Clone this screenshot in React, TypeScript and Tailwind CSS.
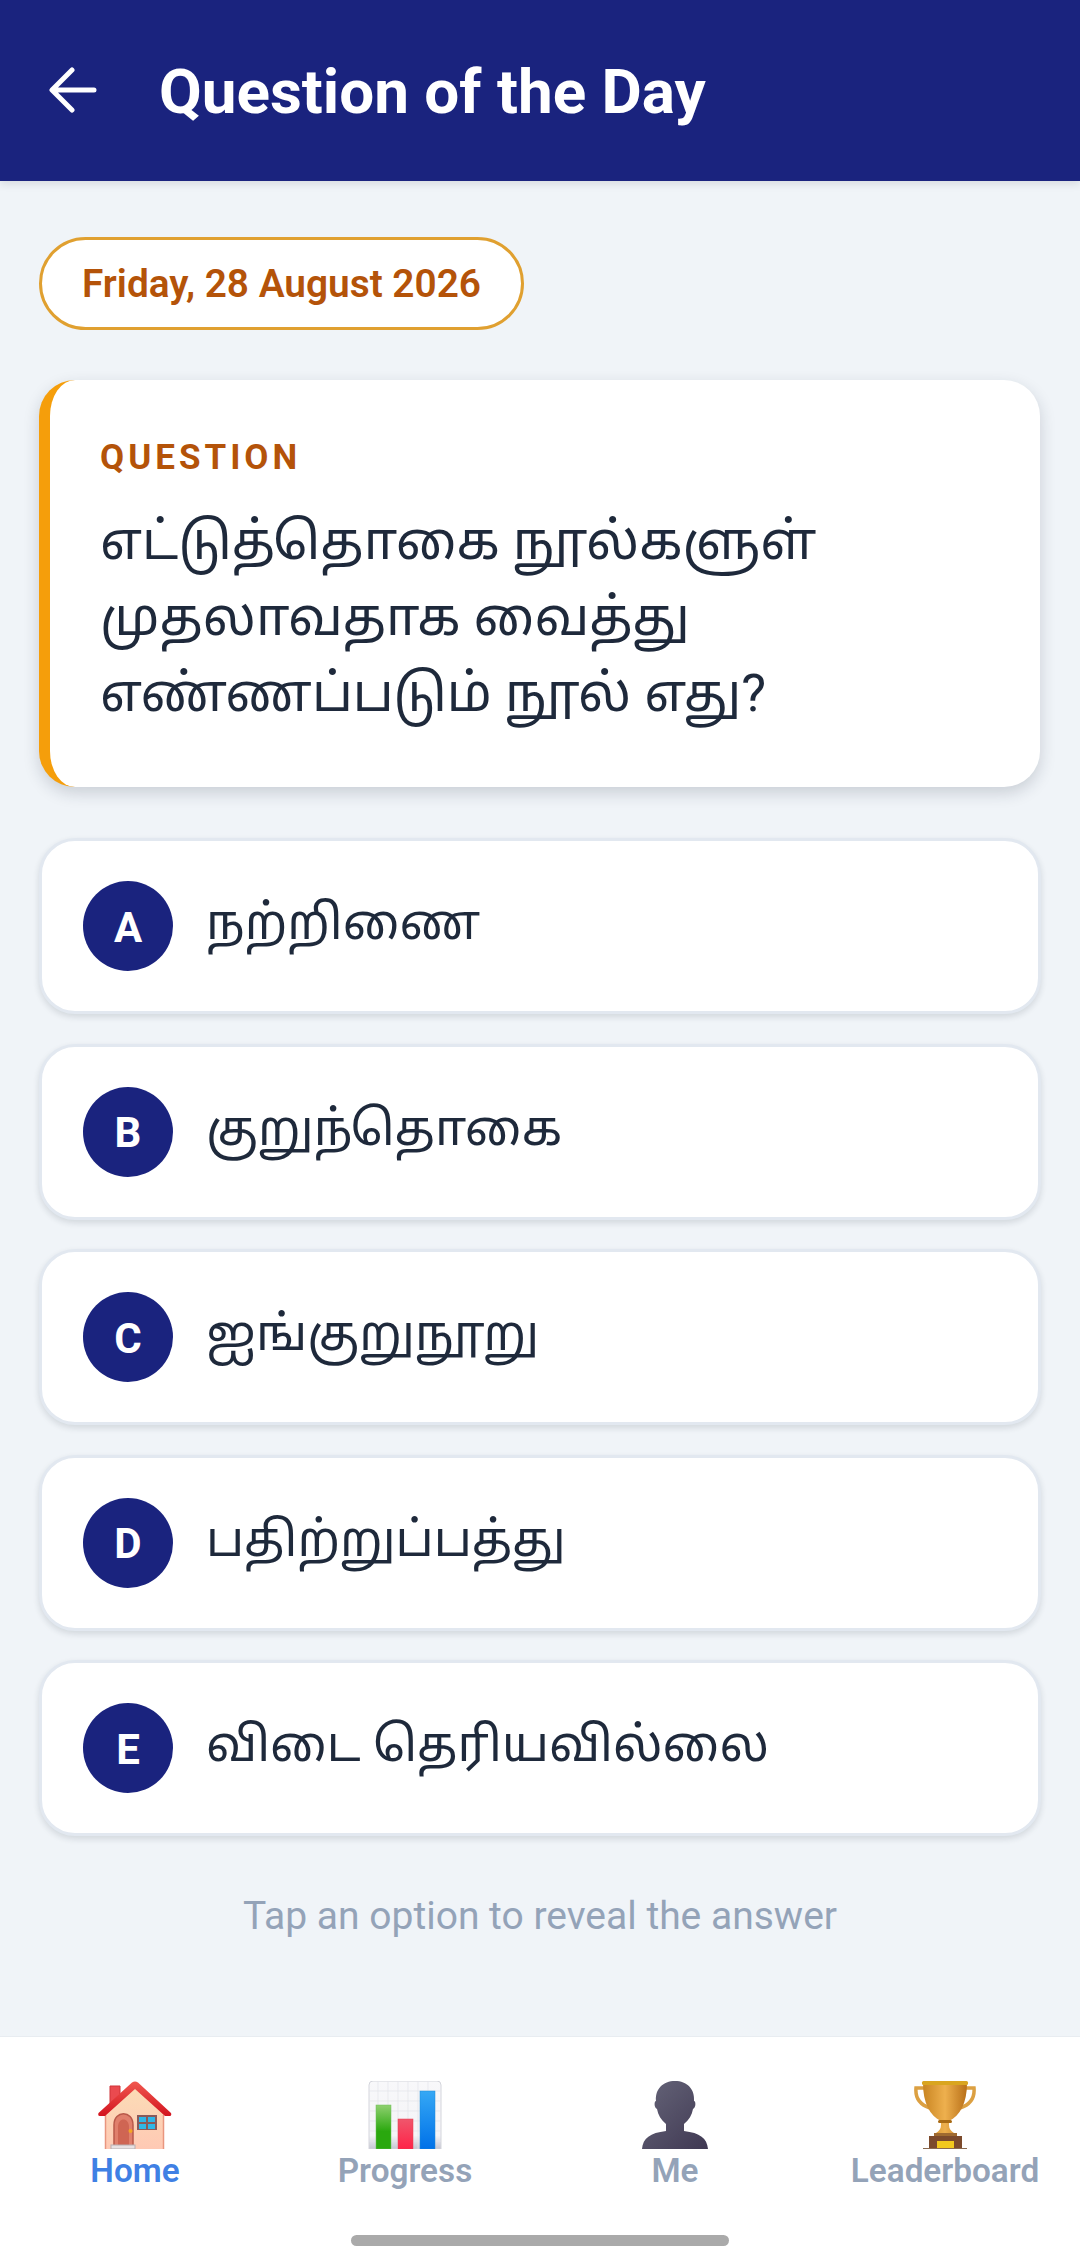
const options = [
  { letter: "A", text: "நற்றிணை" },
  { letter: "B", text: "குறுந்தொகை" },
  { letter: "C", text: "ஐங்குறுநூறு" },
  { letter: "D", text: "பதிற்றுப்பத்து" },
  { letter: "E", text: "விடை தெரியவில்லை" },
];

function HomeEmoji() {
  return (
    <svg width="76" height="68" viewBox="0 0 76 68">
      <defs>
        <linearGradient id="wall" x1="0" y1="0" x2="0" y2="1">
          <stop offset="0" stopColor="#fbdcb6" />
          <stop offset="1" stopColor="#ffc9b4" />
        </linearGradient>
        <linearGradient id="roof" x1="0" y1="0" x2="0" y2="1">
          <stop offset="0" stopColor="#f0584f" />
          <stop offset="1" stopColor="#d3141f" />
        </linearGradient>
      </defs>
      <path d="M13 5 H23 V26 H13 Z" fill="#ea4a4f" stroke="#cf3238" strokeWidth="1" />
      <path d="M8 30 L38 6 L67 30 V68 H8 Z" fill="url(#wall)" />
      <path d="M8.5 34 V68 M66.5 34 V68" stroke="#e9967f" strokeWidth="1.5" />
      <path d="M3 35 Q0.5 35 1.5 32 L35 1.5 Q38 -0.5 41 1.5 L74 32 Q75 35 72.5 35 H68 L38 8 L8 35 Z" fill="url(#roof)" />
      <path d="M17 68 V44 C17 29 36 29 36 44 V68 Z" fill="#e07f6c" stroke="#b9594a" strokeWidth="1.5" />
      <path d="M21 64 V46 C21 36 32 36 32 46 V64 Z" fill="#cf6553" />
      <circle cx="33.5" cy="50" r="2" fill="#f5a623" />
      <rect x="14" y="64" width="24" height="4" fill="#e8e1e2" stroke="#b7aeb0" strokeWidth="1" />
      <rect x="40" y="34" width="20" height="15" fill="#8a5a5a" />
      <rect x="42" y="36" width="7" height="5" fill="#2fb7e8" />
      <rect x="51" y="36" width="7" height="5" fill="#2fb7e8" />
      <rect x="42" y="43" width="7" height="5" fill="#2fb7e8" />
      <rect x="51" y="43" width="7" height="5" fill="#2fb7e8" />
    </svg>
  );
}

function ChartEmoji() {
  return (
    <svg width="74" height="68" viewBox="0 0 74 68">
      <defs>
        <linearGradient id="g1" x1="0" y1="0" x2="0" y2="1">
          <stop offset="0" stopColor="#8fd070" />
          <stop offset="0.6" stopColor="#2aa80e" />
        </linearGradient>
        <linearGradient id="g2" x1="0" y1="0" x2="0" y2="1">
          <stop offset="0" stopColor="#f0566c" />
          <stop offset="1" stopColor="#ff2348" />
        </linearGradient>
        <linearGradient id="g3" x1="0" y1="0" x2="0" y2="1">
          <stop offset="0" stopColor="#35a8f5" />
          <stop offset="1" stopColor="#0071e8" />
        </linearGradient>
        <linearGradient id="gp" x1="0" y1="0" x2="0" y2="1">
          <stop offset="0" stopColor="#f8f8fa" />
          <stop offset="0.8" stopColor="#f4f4f7" />
          <stop offset="1" stopColor="#c5c6d2" />
        </linearGradient>
      </defs>
      <path d="M1 68 V4 Q1 0 5 0 H69 Q73 0 73 4 V68 Z" fill="url(#gp)" stroke="#d4d5dc" strokeWidth="1" />
      <path d="M1 10H73M1 20H73M1 30H73M1 40H73M1 50H73M1 60H73M10 0V68M20 0V68M30 0V68M40 0V68M50 0V68M60 0V68" stroke="#e3e4ea" strokeWidth="0.7" />
      <rect x="8" y="24" width="15" height="44" fill="url(#g1)" stroke="#6cc05a" strokeWidth="0.5" />
      <rect x="30" y="38" width="15" height="30" fill="url(#g2)" stroke="#e4404f" strokeWidth="0.5" />
      <rect x="52" y="10" width="15" height="58" fill="url(#g3)" stroke="#1f8ad8" strokeWidth="0.5" />
    </svg>
  );
}

function PersonEmoji() {
  return (
    <svg width="66" height="68" viewBox="0 0 66 68">
      <defs>
        <linearGradient id="gm" x1="0" y1="0" x2="1" y2="1">
          <stop offset="0" stopColor="#666579" />
          <stop offset="1" stopColor="#3f3852" />
        </linearGradient>
      </defs>
      <path d="M0 68 C1 57 8 52 24 50 V43 C19 39 16 34 15 28 C12 27 12 20 14 20 C13 8 21 0 33 0 C45 0 53 8 52 20 C54 20 54 27 51 28 C50 34 47 39 42 43 V50 C58 52 65 57 66 68 Z" fill="url(#gm)" />
    </svg>
  );
}

function TrophyEmoji() {
  return (
    <svg width="62" height="68" viewBox="0 0 62 68">
      <defs>
        <linearGradient id="gt" x1="0" y1="0" x2="1" y2="0">
          <stop offset="0" stopColor="#c98522" />
          <stop offset="0.5" stopColor="#eeb04e" />
          <stop offset="1" stopColor="#b86f18" />
        </linearGradient>
      </defs>
      <path d="M11 7 H2 C1 18 7 24 16 27" fill="none" stroke="#dca042" strokeWidth="3.5" />
      <path d="M51 7 H60 C61 18 55 24 46 27" fill="none" stroke="#dca042" strokeWidth="3.5" />
      <path d="M9 2 H53 C53 22 46 35 35 40 V44 C35 48 37 50 40 52 H22 C25 50 27 48 27 44 V40 C16 35 9 22 9 2 Z" fill="url(#gt)" />
      <rect x="24" y="39" width="14" height="3" rx="1.5" fill="#a96a14" />
      <rect x="8" y="0" width="46" height="4" rx="1.5" fill="#d9a520" />
      <rect x="15" y="55" width="33" height="13" fill="#7c4a2c" />
      <rect x="20" y="52" width="23" height="3" fill="#a06a30" />
      <rect x="23" y="60" width="17" height="7" fill="#f2c81e" />
      <rect x="9" y="67" width="44" height="1" fill="#8a6a50" />
    </svg>
  );
}

const navItems = [
  { label: "Home", icon: <HomeEmoji />, active: true },
  { label: "Progress", icon: <ChartEmoji />, active: false },
  { label: "Me", icon: <PersonEmoji />, active: false },
  { label: "Leaderboard", icon: <TrophyEmoji />, active: false },
];

export default function App() {
  return (
    <div className="flex h-[2261px] w-[1080px] flex-col overflow-hidden bg-[#f0f4f8] font-['Roboto','Noto_Sans','Noto_Sans_Tamil',sans-serif]">
      <header className="flex h-[181px] shrink-0 items-center bg-[#1a237e] pl-[48px] shadow-[0_3px_8px_rgba(30,41,59,0.12)]">
        <svg width="50" height="46" viewBox="0 0 50 46" fill="none" stroke="white" strokeWidth="5" strokeLinecap="round" strokeLinejoin="round" className="-mt-[2px]">
          <path d="M46 23 H5 M24 3 L4 23 L24 43" />
        </svg>
        <h1 className="mt-[3px] ml-[61px] text-[62px] leading-none font-bold text-white">Question of the Day</h1>
      </header>

      <main className="flex flex-1 flex-col items-stretch pr-[40px] pl-[39px] pt-[56px]">
        <div className="flex h-[93px] w-[485px] items-center justify-center rounded-full border-[3px] border-[#e0a030] bg-white pt-[2px] text-[38.8px] font-semibold text-[#b45309]">
          Friday, 28 August 2026
        </div>

        <section className="mt-[50px] flex h-[407px] flex-col rounded-[36px] border-l-[11px] border-[#f59e0b] bg-white pt-[57px] pl-[50px] shadow-[0_6px_16px_rgba(30,41,59,0.18)]">
          <p className="text-[35px] leading-[42px] font-bold tracking-[4px] text-[#b45309]">QUESTION</p>
          <p className="mt-[24px] w-[800px] text-[52.5px] leading-[76px] text-[#1e293b]">
            எட்டுத்தொகை நூல்களுள் முதலாவதாக வைத்து எண்ணப்படும் நூல் எது?
          </p>
        </section>

        <div className="mt-[51px] -mr-[1px] flex flex-col gap-[29.5px]">
          {options.map((o) => (
            <div
              key={o.letter}
              className="flex h-[176px] items-center gap-[34px] rounded-[36px] border-[3px] border-[#e2e8f0] bg-white pl-[41px] shadow-[0_3px_6px_rgba(30,41,59,0.14)]"
            >
              <div className="flex h-[90px] w-[90px] shrink-0 items-center justify-center rounded-full bg-[#1a237e] pt-[2px] text-[42px] font-bold text-white">
                {o.letter}
              </div>
              <span className="-mt-[6px] -ml-px text-[49px] text-[#1e293b]">{o.text}</span>
            </div>
          ))}
        </div>

        <p className="mt-[57px] ml-[1px] text-center text-[39px] leading-[46px] text-[#94a3b8]">Tap an option to reveal the answer</p>
      </main>

      <nav className="relative flex h-[225px] shrink-0 border-t-[1px] border-[#e8ecf1] bg-white pt-[44px]">
        {navItems.map((item) => (
          <div key={item.label} className="flex flex-1 flex-col items-center">
            <div className="flex h-[68px] items-end">{item.icon}</div>
            <span className={`text-[33.3px] leading-[44px] font-semibold ${item.active ? "text-[#3f80e4]" : "text-[#94a3b8]"}`}>{item.label}</span>
          </div>
        ))}
        <div className="absolute bottom-[15px] left-[351px] h-[11px] w-[378px] rounded-full bg-[#aaaaaa]" />
      </nav>
    </div>
  );
}
